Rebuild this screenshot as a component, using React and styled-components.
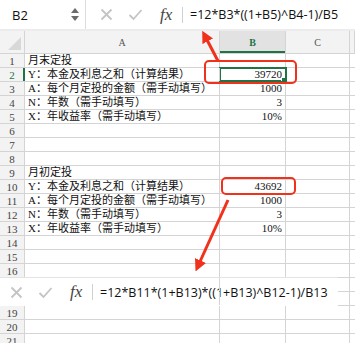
import React from 'react';
import styled, { createGlobalStyle } from 'styled-components';

const GlobalStyle = createGlobalStyle`
  html, body { margin: 0; padding: 0; background: #fff; }
`;

const GRID = '#d4d4d4';
const GREEN = '#217346';
const RED = '#f0311c';
const COLS = '25px 195px 66px 64px 1fr';

const Sheet = styled.div`
  position: relative;
  width: 355px;
  height: 343px;
  overflow: hidden;
  background: #fff;
  font-family: "Liberation Serif", "Noto Sans CJK SC", serif;
`;

const Bar = styled.div`
  display: flex;
  align-items: center;
  height: ${p => p.h}px;
  background: #fff;
  border-bottom: ${p => p.bottom ? '2px solid #ececec' : 'none'};
  box-sizing: border-box;
`;

const NameBox = styled.div`
  display: flex;
  align-items: center;
  justify-content: space-between;
  width: 86px;
  height: 100%;
  padding: 0 6px 0 12px;
  box-sizing: border-box;
  border-right: 1px solid #dcdcdc;
  font-family: "Open Sans", "Liberation Sans", sans-serif;
  font-size: 13px;
  color: #111;
`;

const Spinner = styled.div`
  display: flex;
  flex-direction: column;
  gap: 3px;
  span {
    width: 0;
    height: 0;
    border-left: 4px solid transparent;
    border-right: 4px solid transparent;
  }
  span:first-child { border-bottom: 5px solid #6b6b6b; }
  span:last-child { border-top: 5px solid #6b6b6b; }
`;

const Tools = styled.div`
  display: flex;
  align-items: center;
  width: ${p => p.w}px;
  padding-left: ${p => p.pad}px;
  box-sizing: border-box;
  gap: 15px;
  height: 100%;
`;

const Fx = styled.span`
  font-family: "Liberation Serif", serif;
  font-style: italic;
  font-size: 17px;
  color: #444;
  margin-left: 2px;
`;

const Divider = styled.div`
  width: 1px;
  height: 16px;
  background: #d0d0d0;
`;

const Formula = styled.div`
  padding-left: 7px;
  font-family: "Open Sans", "Liberation Sans", sans-serif;
  font-size: 12.5px;
  color: #111;
  white-space: nowrap;
`;

const FloatBar = styled(Bar)`
  position: absolute;
  left: 0;
  top: 277px;
  width: 338px;
  border-top: 1px solid #e4e4e4;
`;

const Row = styled.div`
  display: grid;
  grid-template-columns: ${COLS};
  height: ${p => p.h}px;
  box-sizing: border-box;
  border-bottom: 1px solid ${GRID};
  background: ${p => p.head ? '#f3f3f3' : '#fff'};
`;

const HeadCell = styled.div`
  display: flex;
  align-items: center;
  justify-content: center;
  border-right: 1px solid ${GRID};
  font-size: 10px;
  color: ${p => p.active ? GREEN : '#555'};
  font-weight: ${p => p.active ? 'bold' : 'normal'};
  background: ${p => p.active ? '#e2e2e2' : 'transparent'};
  box-shadow: ${p => p.active ? `inset 0 -2px 0 ${GREEN}` : 'none'};
`;

const Corner = styled.div`
  position: relative;
  border-right: 1px solid ${GRID};
  &::after {
    content: '';
    position: absolute;
    right: 3px;
    bottom: 3px;
    border-left: 13px solid transparent;
    border-bottom: 13px solid #d8d8d8;
  }
`;

const RowNum = styled.div`
  display: flex;
  align-items: center;
  justify-content: center;
  background: #f3f3f3;
  border-right: 1px solid ${p => p.active ? GREEN : GRID};
  box-shadow: ${p => p.active ? `inset -1px 0 0 ${GREEN}` : 'none'};
  font-size: 11px;
  color: ${p => p.active ? GREEN : '#444'};
`;

const Cell = styled.div`
  position: relative;
  display: flex;
  align-items: center;
  justify-content: ${p => p.num ? 'flex-end' : 'flex-start'};
  padding: 0 3px;
  border-right: 1px solid ${GRID};
  font-size: 11px;
  line-height: 13px;
  color: #111;
  white-space: nowrap;
  overflow: ${p => p.spill ? 'visible' : 'hidden'};
  z-index: ${p => p.spill ? 1 : 0};
  outline: ${p => p.selected ? `2px solid ${GREEN}` : 'none'};
  outline-offset: -1px;
`;

const FillHandle = styled.span`
  position: absolute;
  right: -3px;
  bottom: -3px;
  width: 5px;
  height: 5px;
  background: ${GREEN};
  border: 1px solid #fff;
  z-index: 2;
`;

const Callout = styled.div`
  position: absolute;
  left: ${p => p.x}px;
  top: ${p => p.y}px;
  width: ${p => p.w}px;
  height: ${p => p.h}px;
  border: 2.5px solid ${RED};
  border-radius: 5px;
  box-sizing: border-box;
  z-index: 3;
`;

const Arrows = styled.svg`
  position: absolute;
  left: 0;
  top: 0;
  width: 355px;
  height: 343px;
  z-index: 4;
  pointer-events: none;
`;

const rows = {
  1: ['月末定投', ''],
  2: ['Y：本金及利息之和（计算结果）', '39720'],
  3: ['A：每个月定投的金额（需手动填写）', '1000'],
  4: ['N：年数（需手动填写）', '3'],
  5: ['X：年收益率（需手动填写）', '10%'],
  9: ['月初定投', ''],
  10: ['Y：本金及利息之和（计算结果）', '43692'],
  11: ['A：每个月定投的金额（需手动填写）', '1000'],
  12: ['N：年数（需手动填写）', '3'],
  13: ['X：年收益率（需手动填写）', '10%'],
};

function Cross() {
  return (
    <svg width="13" height="13" viewBox="0 0 13 13">
      <path d="M1.5 1.5 L11.5 11.5 M11.5 1.5 L1.5 11.5" stroke="#c4c4c4" strokeWidth="1.8" fill="none" />
    </svg>
  );
}

function Check() {
  return (
    <svg width="15" height="13" viewBox="0 0 15 13">
      <path d="M1.5 7 L5.5 11 L13.5 2" stroke="#c4c4c4" strokeWidth="1.8" fill="none" />
    </svg>
  );
}

function Tools2({ w, pad }) {
  return (
    <Tools w={w} pad={pad}>
      <Cross />
      <Check />
      <Fx>fx</Fx>
    </Tools>
  );
}

export default function App() {
  const nums = Array.from({ length: 21 }, (_, i) => i + 1);
  return (
    <Sheet>
      <GlobalStyle />
      <Bar h={31} bottom>
        <NameBox>
          <span>B2</span>
          <Spinner><span /><span /></Spinner>
        </NameBox>
        <Tools2 w={96} pad={14} />
        <Divider />
        <Formula>=12*B3*((1+B5)^B4-1)/B5</Formula>
      </Bar>
      <Row h={23} head>
        <Corner />
        <HeadCell>A</HeadCell>
        <HeadCell active>B</HeadCell>
        <HeadCell>C</HeadCell>
        <HeadCell />
      </Row>
      {nums.map(n => {
        const r = rows[n] || ['', ''];
        return (
          <Row h={14} key={n}>
            <RowNum active={n === 2}>{n}</RowNum>
            <Cell spill>{r[0]}</Cell>
            <Cell num selected={n === 2}>
              {r[1]}
              {n === 2 && <FillHandle />}
            </Cell>
            <Cell />
            <Cell />
          </Row>
        );
      })}

      <Callout x={204} y={60} w={93} h={24} />
      <Callout x={221} y={177} w={75} h={18} />

      <FloatBar h={29}>
        <Tools2 w={92} pad={10} />
        <Divider />
        <Formula>=12*B11*(1+B13)*((1+B13)^B12-1)/B13</Formula>
      </FloatBar>

      <Arrows viewBox="0 0 355 343">
        <defs>
          <marker id="head" markerWidth="4" markerHeight="4" refX="2" refY="2" orient="auto">
            <path d="M0 0 L4 2 L0 4 Z" fill={RED} />
          </marker>
        </defs>
        <line x1="218" y1="61" x2="205" y2="36" stroke={RED} strokeWidth="3" markerEnd="url(#head)" />
        <line x1="228" y1="200" x2="198" y2="266" stroke={RED} strokeWidth="3" markerEnd="url(#head)" />
      </Arrows>
    </Sheet>
  );
}
